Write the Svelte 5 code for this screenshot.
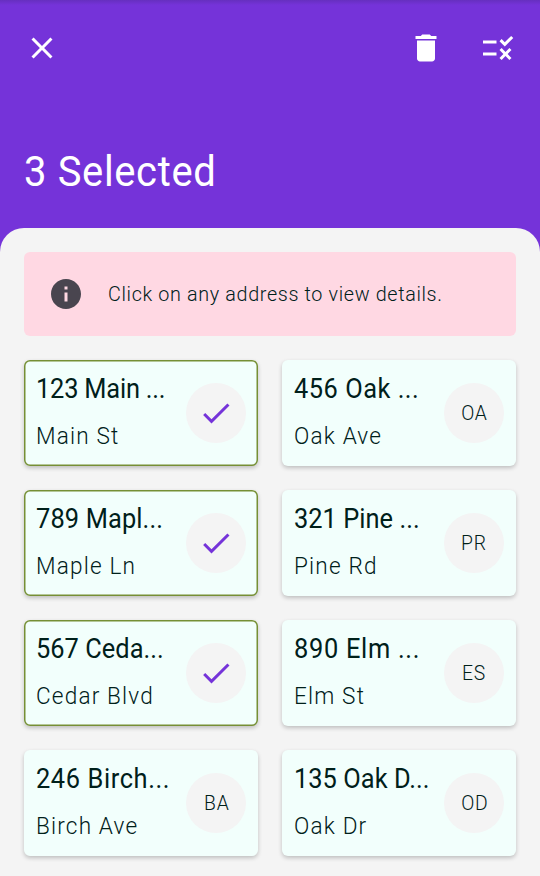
<script>
  const addresses = [
    { title: '123 Main ...', street: 'Main St', initials: 'MS', selected: true, tracking: -0.2 },
    { title: '456 Oak ...', street: 'Oak Ave', initials: 'OA', selected: false, tracking: 0.55 },
    { title: '789 Mapl...', street: 'Maple Ln', initials: 'ML', selected: true, tracking: 0.15 },
    { title: '321 Pine ...', street: 'Pine Rd', initials: 'PR', selected: false, tracking: 0.05 },
    { title: '567 Ceda...', street: 'Cedar Blvd', initials: 'CB', selected: true, tracking: 0.05 },
    { title: '890 Elm ...', street: 'Elm St', initials: 'ES', selected: false, tracking: 0.75 },
    { title: '246 Birch...', street: 'Birch Ave', initials: 'BA', selected: false, tracking: 0.65 },
    { title: '135 Oak D...', street: 'Oak Dr', initials: 'OD', selected: false, tracking: 0.05 }
  ];
  const count = addresses.filter((a) => a.selected).length;
</script>

<div class="screen">
  <header>
    <div class="toolbar">
      <svg class="icon" viewBox="0 0 24 24"><path d="M19 6.41 17.59 5 12 10.59 6.41 5 5 6.41 10.59 12 5 17.59 6.41 19 12 13.41 17.59 19 19 17.59 13.41 12z" /></svg>
      <div class="actions">
        <svg class="icon" viewBox="0 0 24 24"><path d="M6 19c0 1.1.9 2 2 2h8c1.1 0 2-.9 2-2V7H6v12zM19 4h-3.5l-1-1h-5l-1 1H5v2h14V4z" /></svg>
        <svg class="icon" viewBox="0 0 24 24"><path d="M16.54 11 13 7.46l1.41-1.41 2.12 2.12 4.24-4.24 1.41 1.41L16.54 11zM11 7H2v2h9V7zM21 13.41 19.59 12 17 14.59 14.41 12 13 13.41 15.59 16 13 18.59 14.41 20 17 17.41 19.59 20 21 18.59 18.41 16 21 13.41zM11 15H2v2h9v-2z" /></svg>
      </div>
    </div>
    <h1><span class="narrow">{count} Selected</span></h1>
  </header>

  <main>
    <div class="notice">
      <svg class="icon" viewBox="0 0 24 24"><path d="M12 2C6.48 2 2 6.48 2 12s4.48 10 10 10 10-4.48 10-10S17.52 2 12 2zm1 15h-2v-6h2v6zm0-8h-2V7h2v2z" /></svg>
      <p class="narrow">Click on any address to view details.</p>
    </div>
    <div class="grid">
      {#each addresses as item}
        <article class="card" class:selected={item.selected}>
          <div class="text">
            <h2 class="narrow" style="letter-spacing: {item.tracking}px">{item.title}</h2>
            <p class="narrow">{item.street}</p>
          </div>
          <div class="avatar">
            {#if item.selected}
              <svg class="icon" viewBox="0 0 24 24"><path d="M9 16.17 4.83 12l-1.42 1.41L9 19 21 7l-1.41-1.41z" /></svg>
            {:else}
              <span>{item.initials}</span>
            {/if}
          </div>
        </article>
      {/each}
    </div>
  </main>
</div>

<style>
  :global(body) { margin: 0; }
  .screen {
    box-sizing: border-box;
    width: 540px;
    height: 876px;
    overflow: hidden;
    display: flex;
    flex-direction: column;
    background: linear-gradient(#662fbf 0, #7533d9 5px);
    font-family: Roboto, "Liberation Sans", sans-serif;
    color: #00201a;
  }
  h1, h2, p { margin: 0; font-weight: 400; white-space: pre; }
  .narrow { transform: scaleX(0.94); transform-origin: left; }
  .icon { display: block; width: 36px; height: 36px; fill: currentColor; flex: none; }
  header { height: 228px; flex: none; color: #fff; }
  .toolbar {
    height: 96px;
    box-sizing: border-box;
    padding: 0 24px;
    display: flex;
    align-items: center;
    justify-content: space-between;
  }
  .actions { display: flex; gap: 36px; }
  h1 { padding: 47px 0 0 24px; font-size: 42.5px; line-height: 58px; letter-spacing: 0.7px; }
  h1 span { display: inline-block; }
  main {
    flex: 1;
    padding: 24px;
    border-radius: 24px 24px 0 0;
    background: #f4f4f4;
  }
  .notice {
    box-sizing: border-box;
    height: 84px;
    padding: 0 24px;
    display: flex;
    align-items: center;
    gap: 24px;
    border-radius: 6px;
    background: #ffd8e3;
  }
  .notice .icon { color: #49454f; }
  .notice p { font-size: 21px; font-weight: 300; letter-spacing: 0.7px; }
  .grid {
    margin-top: 24px;
    display: grid;
    grid-template-columns: 1fr 1fr;
    grid-auto-rows: 106px;
    gap: 24px;
  }
  .card {
    box-sizing: border-box;
    padding: 0 12px;
    display: flex;
    align-items: center;
    justify-content: space-between;
    border-radius: 6px;
    background: #f2fffc;
    box-shadow: 0 2px 4px rgba(0, 0, 0, 0.22);
  }
  .selected { box-shadow: inset 0 0 0 1.5px #768f35, 0 2px 4px rgba(0, 0, 0, 0.22); }
  .text { width: 138px; padding-bottom: 2px; }
  h2 { font-size: 27px; line-height: 48px; }
  .text p { font-size: 24px; font-weight: 300; line-height: 46px; letter-spacing: 1.25px; }
  .avatar {
    width: 60px;
    height: 60px;
    flex: none;
    display: flex;
    align-items: center;
    justify-content: center;
    border-radius: 50%;
    background: #f4f4f4;
    font-size: 21px;
    font-weight: 300;
  }
  .avatar span { transform: scaleX(0.92); letter-spacing: 0.8px; margin-right: -0.8px; }
  .avatar .icon { color: #7533d9; }
</style>
